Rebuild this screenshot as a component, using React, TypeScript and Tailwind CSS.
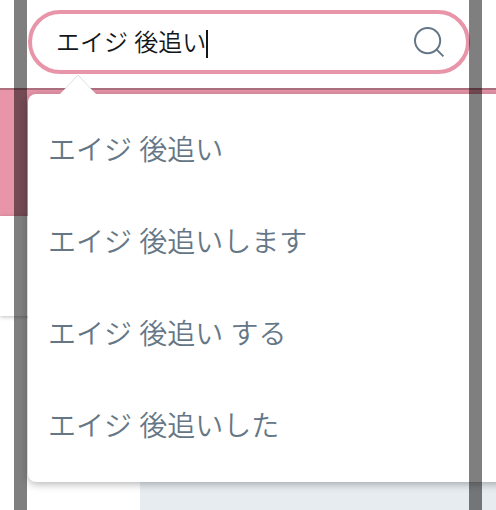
const suggestions = [
  "エイジ 後追い",
  "エイジ 後追いします",
  "エイジ 後追い する",
  "エイジ 後追いした",
];

function SearchIcon() {
  return (
    <svg width="32" height="32" viewBox="0 0 32 32" fill="none" stroke="#657786" strokeWidth="2">
      <circle cx="14.6" cy="14.6" r="12.6" />
      <path d="M23.4 23.4L30.4 30.4" />
    </svg>
  );
}

function SearchField() {
  return (
    <div className="flex h-16 w-[442px] items-center justify-between rounded-full border-4 border-[#e895a9] bg-white pl-6 pr-[21px]">
      <div className="flex items-center pt-1 text-2xl font-[350] text-[#14171a]">
        <span className="-mt-1.5 whitespace-pre [word-spacing:1px]">エイジ 後追い</span>
        <span className="h-7 w-0.5 bg-[#14171a]" />
      </div>
      <SearchIcon />
    </div>
  );
}

function SuggestionMenu() {
  return (
    <div className="absolute left-7 top-[94px] h-[388px] w-[520px] rounded-lg bg-white pt-2 shadow-[0_2px_8px_rgba(0,0,0,0.3)]">
      {/* Caret */}
      <svg className="absolute -top-5 left-8" width="38" height="21" viewBox="0 0 38 21">
        <path d="M0 20L18 1L36 20V21H0Z" fill="#fff" />
        <path d="M4.5 15.3L18 1L31.5 15.3" fill="none" stroke="#000" strokeOpacity="0.13" />
      </svg>
      <ul>
        {suggestions.map((text) => (
          <li
            key={text}
            className="flex h-[92px] items-center whitespace-pre pl-5 text-[28px] font-[350] text-[#657786] [word-spacing:1px]"
          >
            {text}
          </li>
        ))}
      </ul>
    </div>
  );
}

export default function App() {
  return (
    <div className="relative h-[510px] w-[496px] overflow-hidden bg-white font-['Noto_Sans_CJK_JP',sans-serif]">
      {/* Header */}
      <header className="h-[88px] pl-7 pt-[10px]">
        <SearchField />
      </header>

      {/* Profile banner */}
      <div className="h-32 border-t-2 border-[#ae707f] bg-[#e895a9]" />

      {/* Profile nav */}
      <div className="relative h-[100px] bg-white shadow-[0_1px_4px_rgba(0,0,0,0.25)]" />

      <div className="flex h-[194px]">
        <div className="w-[140px] bg-white" />
        <div className="flex-1 bg-[#e6ecf0]" />
      </div>

      {/* Frame edges */}
      <div className="absolute inset-y-0 left-[14px] w-[13px] bg-black/50" />
      <SuggestionMenu />
      <div className="absolute inset-y-0 left-[469px] w-[13px] bg-black/50" />
    </div>
  );
}
